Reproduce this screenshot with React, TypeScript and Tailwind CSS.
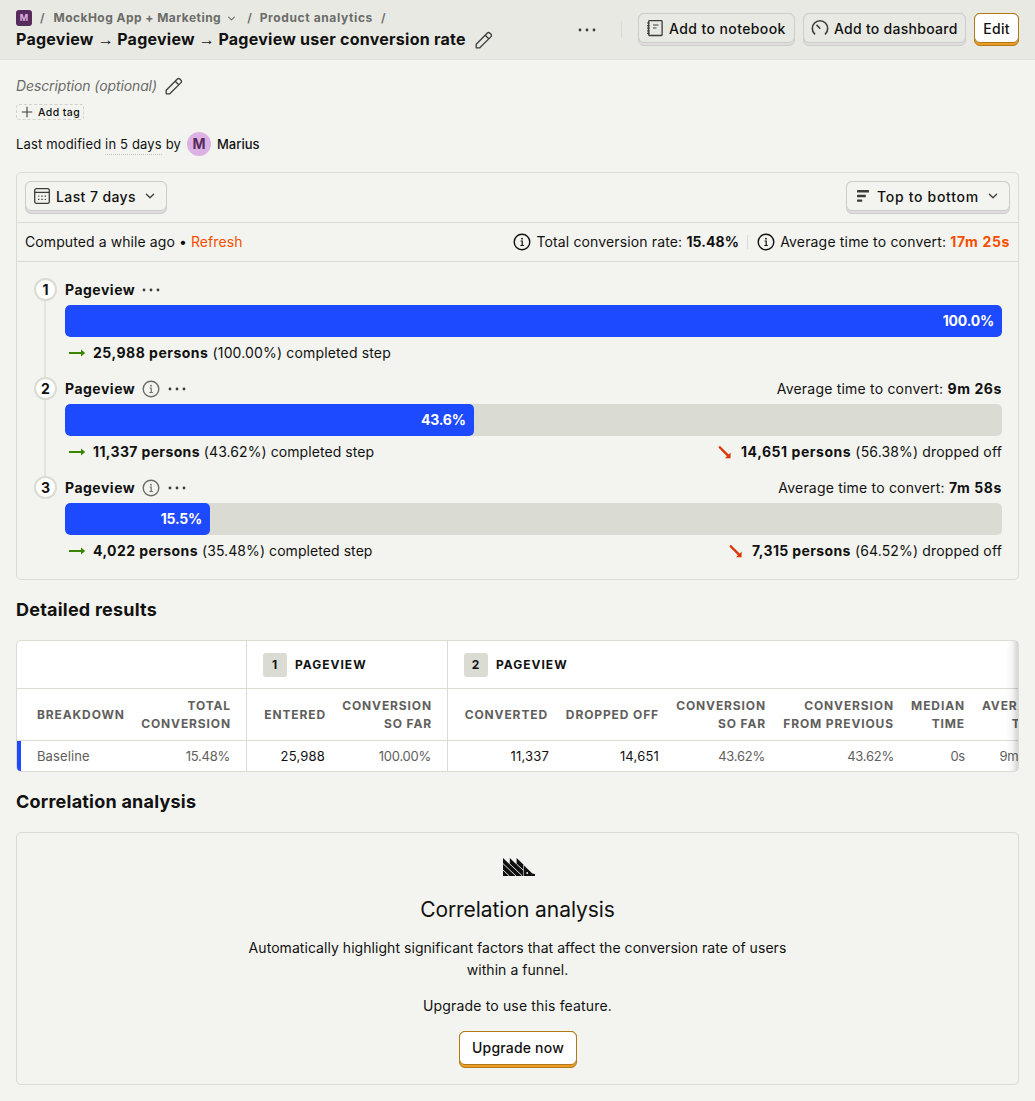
import React from "react";

type P = { className?: string };

const Pencil = ({ className = "" }: P) => (
  <svg className={className} width="20" height="20" viewBox="0 0 20 20" fill="none" stroke="#3c3d3a" strokeWidth="1.3" strokeLinejoin="round">
    <path d="M2.2 17.8v-3.6L13.4 3a1.6 1.6 0 0 1 2.3 0l1.3 1.3a1.6 1.6 0 0 1 0 2.3L5.8 17.8z" />
    <path d="M11.2 5.2l3.6 3.6" />
  </svg>
);

const Dots = ({ className = "" }: P) => (
  <svg className={className} width="20" height="20" viewBox="0 0 20 20" fill="#3c3d3a">
    <circle cx="3" cy="10" r="1.4" />
    <circle cx="10" cy="10" r="1.4" />
    <circle cx="17" cy="10" r="1.4" />
  </svg>
);

const Chevron = ({ className = "" }: P) => (
  <svg className={className} width="16" height="16" viewBox="0 0 16 16" fill="none" stroke="#3c3d3a" strokeWidth="1.3" strokeLinecap="round" strokeLinejoin="round">
    <path d="M4.4 6.3L8 9.7l3.6-3.4" />
  </svg>
);

const Notebook = () => (
  <svg width="20" height="20" viewBox="0 0 20 20" fill="none" stroke="#3c3d3a" strokeWidth="1.3">
    <rect x="3.7" y="2.7" width="13.4" height="14.8" rx="0.8" />
    <path d="M2 5h2.6M2 7.6h2.6M2 10.2h2.6M2 12.8h2.6M2 15.4h2.6M8 7h5.5M8 10h3.5" strokeWidth="1.2" />
  </svg>
);

const Gauge = () => (
  <svg width="20" height="20" viewBox="0 0 20 20" fill="none" stroke="#3c3d3a" strokeWidth="1.6" strokeLinecap="round">
    <path d="M4.6 15.9A7.7 7.7 0 1 1 15.4 15.9" />
    <path d="M7 7.4l2.8 2.8" />
  </svg>
);

const Calendar = () => (
  <svg width="20" height="20" viewBox="0 0 20 20" fill="none" stroke="#3c3d3a" strokeWidth="1.3">
    <rect x="2.7" y="2.7" width="14.6" height="14.6" rx="1.6" />
    <path d="M2.7 6.4h14.6" />
    <path d="M9.3 10.1h1.4M12.6 10.1h1.4M6 13.4h1.4M9.3 13.4h1.4" strokeWidth="1.3" />
    <path d="M6 10.1h1.4M12.6 13.4h1.4" strokeWidth="1" />
  </svg>
);

const BarsIcon = () => (
  <svg width="20" height="20" viewBox="0 0 20 20" fill="#3c3d3a">
    <rect x="4" y="4" width="12" height="2.6" rx=".5" />
    <rect x="4" y="8.8" width="8.8" height="2.4" rx=".5" />
    <rect x="4" y="13.4" width="5.2" height="2.4" rx=".5" />
  </svg>
);

const Info = ({ color }: { color: string }) => (
  <svg width="20" height="20" viewBox="0 0 20 20" fill="none" stroke={color} strokeWidth="1.4">
    <circle cx="10" cy="10" r="7.8" />
    <path d="M8.6 9h1.6v4.6M8.4 13.5h3.4" strokeWidth="1.2" />
    <circle cx="10" cy="6.7" r="0.9" fill={color} stroke="none" />
  </svg>
);

const ArrowRight = () => (
  <svg width="24" height="20" viewBox="0 0 24 20" className="shrink-0">
    <path d="M4 9h12V6.6l4.2 3.4-4.2 3.4V11H4z" fill="#388600" />
  </svg>
);

const ArrowDown = () => (
  <svg width="20" height="20" viewBox="0 0 20 20" className="shrink-0">
    <path d="M4.8 3.7l8.9 8.7 1.9-1.8v5.6h-5.6l1.9-1.9-8.5-8.9z" fill="#db3707" />
  </svg>
);

const Logo = () => (
  <svg width="32" height="18" viewBox="0 0 32 18">
    <g fill="#111">
      <path d="M0 0l6.8 6.4V0l6.8 6.4V0L20.4 6.4V18H0z" />
      <path d="M21 7.4l8.4 8.2c.8.3 1.6.5 2.6.5V18H21z" />
    </g>
    <path d="M0 5.6L13 18M0 12L6.3 18M6.8 6L19.4 18M13.6 6l6.8 6.4" stroke="#f3f4ef" strokeWidth="0.9" />
    <circle cx="24.2" cy="15" r=".9" fill="#f3f4ef" />
  </svg>
);

const TitleArrow = () => <span className="font-['Liberation_Sans'] font-normal tracking-[-0.45px]">{" → "}</span>;

function Button({ children, width, face, primary = false }: { children: React.ReactNode; width: string; face: string; primary?: boolean }) {
  return (
    <div className={`${width} shrink-0 rounded-[6px] border ${primary ? "border-[#b17816] bg-[#eb9d2a]" : "border-[#cccccc] bg-[#e1dddd]"}`}>
      <div className={`-mx-px -mt-px mb-[2px] flex items-center rounded-[6px] border text-sm font-medium whitespace-nowrap text-[#111] ${face} ${primary ? "border-[#b17816] bg-white" : "border-[#cccccc]"}`}>
        {children}
      </div>
    </div>
  );
}

type StepProps = {
  n: number;
  pct: string;
  width: string;
  persons: string;
  share: string;
  track: string;
  time?: string;
  dropped?: string;
  dropShare?: string;
  dropTrack?: string;
};

function Step({ n, pct, width, persons, share, track, time, dropped, dropShare, dropTrack = "" }: StepProps) {
  return (
    <div className="flex h-[99px]">
      <div className="flex w-[23px] shrink-0 flex-col">
        <div className="flex size-[23px] shrink-0 items-center justify-center rounded-full border-2 border-[#dadbd2] bg-white text-sm font-bold">{n}</div>
        {n < 3 && <div className="ml-[10px] w-[2px] grow bg-[#e3e4dd]" />}
      </div>
      <div className="ml-2 w-[937px]">
        <div className="flex h-[27px] items-center pb-[4px]">
          <span className="font-bold tracking-[0.5px]">Pageview</span>
          {n > 1 && <span className="ml-[6px]"><Info color="#6b6c69" /></span>}
          <Dots className="ml-[6px]" />
          {time && <span className="ml-auto tracking-[0.2px]">Average time to convert: <b className="tracking-[0.6px]">{time}</b></span>}
        </div>
        <div className="h-8 overflow-hidden rounded-[5px] bg-[#dadbd2]">
          <div className="flex h-8 items-center justify-end rounded-[5px] bg-[#1d4aff] pr-2 font-bold tracking-[-0.2px] text-white" style={{ width }}>{pct}</div>
        </div>
        <div className="flex h-8 items-center tracking-[0.15px]">
          <ArrowRight />
          <span className={n > 1 ? "ml-1 tracking-[0.07px]" : "ml-1"}><b className={track}>{persons} persons</b> ({share}) completed step</span>
          {dropped && (
            <span className="ml-auto flex items-center">
              <ArrowDown />
              <span className="ml-[6px]"><b className={dropTrack}>{dropped} persons</b> ({dropShare}) dropped off</span>
            </span>
          )}
        </div>
      </div>
    </div>
  );
}

const columns: { w: string; lines: string[]; value: string; strong?: boolean; edge?: boolean; pad?: string; headPad?: string }[] = [
  { w: "w-[115px]", lines: ["TOTAL", "CONVERSION"], value: "15.48%", edge: true },
  { w: "w-[87px]", lines: ["ENTERED"], value: "25,988", strong: true, pad: "pr-[9px]", headPad: "pr-[8px]" },
  { w: "w-[114px]", lines: ["CONVERSION", "SO FAR"], value: "100.00%", edge: true },
  { w: "w-[110px]", lines: ["CONVERTED"], value: "11,337", strong: true, pad: "pr-[9px]", headPad: "pr-[10px]" },
  { w: "w-[109px]", lines: ["DROPPED OFF"], value: "14,651", strong: true, headPad: "pr-[8px]" },
  { w: "w-[106px]", lines: ["CONVERSION", "SO FAR"], value: "43.62%" },
  { w: "w-[129px]", lines: ["CONVERSION", "FROM PREVIOUS"], value: "43.62%", headPad: "pr-[8px]" },
  { w: "w-[71px]", lines: ["MEDIAN", "TIME"], value: "0s", headPad: "pr-[8px]" },
  { w: "w-[79px]", lines: ["AVERAGE", "TIME"], value: "9m 26s" },
];

function GroupHead({ n }: { n: number }) {
  return (
    <>
      <span className="flex size-6 items-center justify-center rounded-[3px] bg-[#dadbd2] pr-px text-xs font-bold">{n}</span>
      <span className="ml-2 text-xs font-bold tracking-[1px]">PAGEVIEW</span>
    </>
  );
}

export default function App() {
  return (
    <div className="h-[1101px] w-[1035px] overflow-hidden bg-[#f3f4ef] font-['Inter',sans-serif] text-sm text-[#111]">
      <header className="flex h-[60px] items-start border-b border-[#e1e2dc] bg-[#e8e9e3] pr-4 pl-4">
        <div className="grow whitespace-nowrap pt-[10px]">
          <div className="flex h-4 items-center text-xs font-bold text-[#6b6c69]">
            <span className="flex size-4 items-center justify-center rounded-[3px] bg-[#572b5c] text-[9px] text-[#dcb1e3]">M</span>
            <span className="ml-2 font-semibold">/</span>
            <span className="ml-[9px] tracking-[0.46px]">MockHog App + Marketing</span>
            <Chevron className="ml-[4px] size-[13px] opacity-75" />
            <span className="ml-[9px] font-semibold">/</span>
            <span className="ml-2 tracking-[0.62px]">Product analytics</span>
            <span className="ml-2 font-semibold">/</span>
          </div>
          <div className="flex h-[26px] items-center text-base font-bold">
            <span className="tracking-[0.25px] whitespace-pre">
              Pageview<TitleArrow />Pageview<TitleArrow />Pageview user conversion rate
            </span>
            <Pencil className="mt-[2px] ml-2" />
          </div>
        </div>
        <div className="flex pt-[13px]">
          <Dots className="mt-[7px] mr-[24px]" />
          <div className="mt-2 mr-4 h-[17px] w-px bg-[#dadbd2]" />
          <div className="flex gap-2">
            <Button width="w-[157px]" face="h-[30px] bg-[#e8e9e3] pl-[6px] gap-1"><Notebook /><span className="pt-[2px] tracking-[0.4px]">Add to notebook</span></Button>
            <Button width="w-[163px]" face="h-[30px] bg-[#e8e9e3] pl-[6px] gap-1"><Gauge /><span className="pt-[2px] tracking-[0.27px]">Add to dashboard</span></Button>
            <Button width="w-[45px]" face="h-[30px] justify-center" primary><span className="pt-[2px] tracking-[0.3px]">Edit</span></Button>
          </div>
        </div>
      </header>

      <main className="px-4">
        <div className="flex h-[28px] items-center pt-[24px] pb-0 text-[#6b6c69] italic">
          <span className="tracking-[-0.11px]">Description (optional)</span>
          <Pencil className="ml-[7px]" />
        </div>
        <div className="mt-[16px] flex h-4 w-[68px] items-center rounded-[3px] border border-dashed border-[#d0d1c9] pl-1 text-[10.5px] font-medium">
          <svg width="12" height="12" viewBox="0 0 12 12" stroke="#3c3d3a" strokeWidth="1.1"><path d="M6 .8v10.4M.8 6h10.4" /></svg>
          <span className="ml-[5px] tracking-[0.4px] whitespace-nowrap">Add tag</span>
        </div>
        <div className="mt-3 flex h-6 items-center text-[13px]">
          <span className="tracking-[0.16px]">Last modified <span className="border-b border-dotted border-[#c4c5bd] pb-[2px]">in 5 days</span> by</span>
          <span className="ml-[6px] flex size-6 items-center justify-center rounded-full bg-[#dcb1e3] text-sm font-bold text-[#572b5c]">M</span>
          <span className="ml-[6px] font-medium">Marius</span>
        </div>

        <section className="mt-4 h-[408px] rounded-[5px] border border-[#dadbd2]">
          <div className="flex h-[50px] justify-between border-b border-[#dadbd2] px-2 pt-2">
            <Button width="w-[142px] h-[33px]" face="h-[30px] bg-[#f3f4ef] pl-[6px]"><Calendar /><span className="ml-1 pt-[2px] tracking-[0.4px]">Last 7 days</span><Chevron className="ml-[6px]" /></Button>
            <Button width="w-[164px] h-[33px]" face="h-[30px] bg-[#f3f4ef] pl-[6px]"><BarsIcon /><span className="ml-[4px] pt-[2px] tracking-[0.7px]">Top to bottom</span><Chevron className="ml-[6px]" /></Button>
          </div>
          <div className="flex h-[39px] items-center border-b border-[#dadbd2] px-2">
            <span className="tracking-[0.09px]">Computed a while ago • <span className="text-[#f54e00]">Refresh</span></span>
            <div className="ml-auto flex items-center">
              <Info color="#111" />
              <span className="ml-1 tracking-[0.14px]">Total conversion rate: <b className="tracking-[0.1px]">15.48%</b></span>
              <span className="mx-2 h-[14px] w-px bg-[#dadbd2]" />
              <Info color="#111" />
              <span className="ml-1 tracking-[0.18px]">Average time to convert: <b className="tracking-[0.65px] text-[#f54e00]">17m 25s</b></span>
            </div>
          </div>
          <div className="pt-4 pl-[17px]">
            <Step n={1} pct="100.0%" width="100%" persons="25,988" share="100.00%" track="tracking-[0.5px]" />
            <Step n={2} pct="43.6%" width="43.62%" persons="11,337" share="43.62%" track="tracking-[0.36px]" time="9m 26s" dropped="14,651" dropShare="56.38%" dropTrack="tracking-[0.55px]" />
            <Step n={3} pct="15.5%" width="15.48%" persons="4,022" share="35.48%" track="tracking-[0.42px]" time="7m 58s" dropped="7,315" dropShare="64.52%" dropTrack="tracking-[0.37px]" />
          </div>
        </section>

        <h2 className="flex h-[60px] items-center text-lg font-bold tracking-[0.22px]">Detailed results</h2>

        <section className="relative h-[132px] overflow-hidden rounded-[5px] border border-[#dadbd2] bg-white">
          <div className="w-[1036px]">
            <div className="flex h-12 border-b border-[#dadbd2]">
              <div className="w-[230px] border-r border-[#dadbd2]" />
              <div className="flex w-[201px] items-center border-r border-[#dadbd2] pl-4"><GroupHead n={1} /></div>
              <div className="flex items-center pl-4"><GroupHead n={2} /></div>
            </div>
            <div className="flex h-[52px] border-b border-[#dadbd2] text-xs font-bold tracking-[0.88px] text-[#5f605d]">
              <div className="flex w-[115px] shrink-0 items-center pl-5">BREAKDOWN</div>
              {columns.map((c, i) => (
                <div key={i} className={`${c.w} flex shrink-0 flex-col items-end justify-center leading-[18px] whitespace-nowrap ${c.edge ? "border-r border-[#dadbd2] pr-[15px]" : c.headPad ?? "pr-[7px]"}`}>
                  {c.lines.map((l) => <span key={l}>{l}</span>)}
                </div>
              ))}
            </div>
            <div className="flex h-[30px] items-center text-[13px] text-[#5f605d]">
              <div className="flex h-[30px] w-[115px] shrink-0 items-center border-l-4 border-[#1d4aff] pt-px pl-4 tracking-[0.1px]">Baseline</div>
              {columns.map((c, i) => (
                <div key={i} className={`${c.w} flex h-[30px] shrink-0 items-center justify-end pt-px whitespace-nowrap ${c.strong ? "tracking-[0.2px] text-[#111]" : "tracking-[-0.25px]"} ${c.edge ? "border-r border-[#dadbd2] pr-4" : c.pad ?? "pr-2"}`}>
                  {c.value}
                </div>
              ))}
            </div>
          </div>
          <div className="absolute inset-y-0 right-0 w-3 bg-gradient-to-r from-transparent via-black/4 to-black/17" />
        </section>

        <h2 className="flex h-[60px] items-center text-lg font-bold tracking-[0.22px]">Correlation analysis</h2>

        <section className="flex h-[253px] flex-col items-center rounded-[5px] border border-[#dadbd2] pt-[25px]">
          <div className="pl-[2px]"><Logo /></div>
          <h3 className="mt-[18px] text-[21px] leading-8 tracking-[-0.06px]">Correlation analysis</h3>
          <p className="mt-[11px] w-[560px] text-center leading-[22px] tracking-[0.05px]">Automatically highlight significant factors that affect the conversion rate of users within a funnel.</p>
          <p className="mt-[14px] mb-[14px] leading-[22px] tracking-[0.16px]">Upgrade to use this feature.</p>
          <Button width="w-[118px] h-[37px]" face="h-[34px] justify-center" primary><span className="pl-px tracking-[0.18px]">Upgrade now</span></Button>
        </section>
      </main>
    </div>
  );
}
